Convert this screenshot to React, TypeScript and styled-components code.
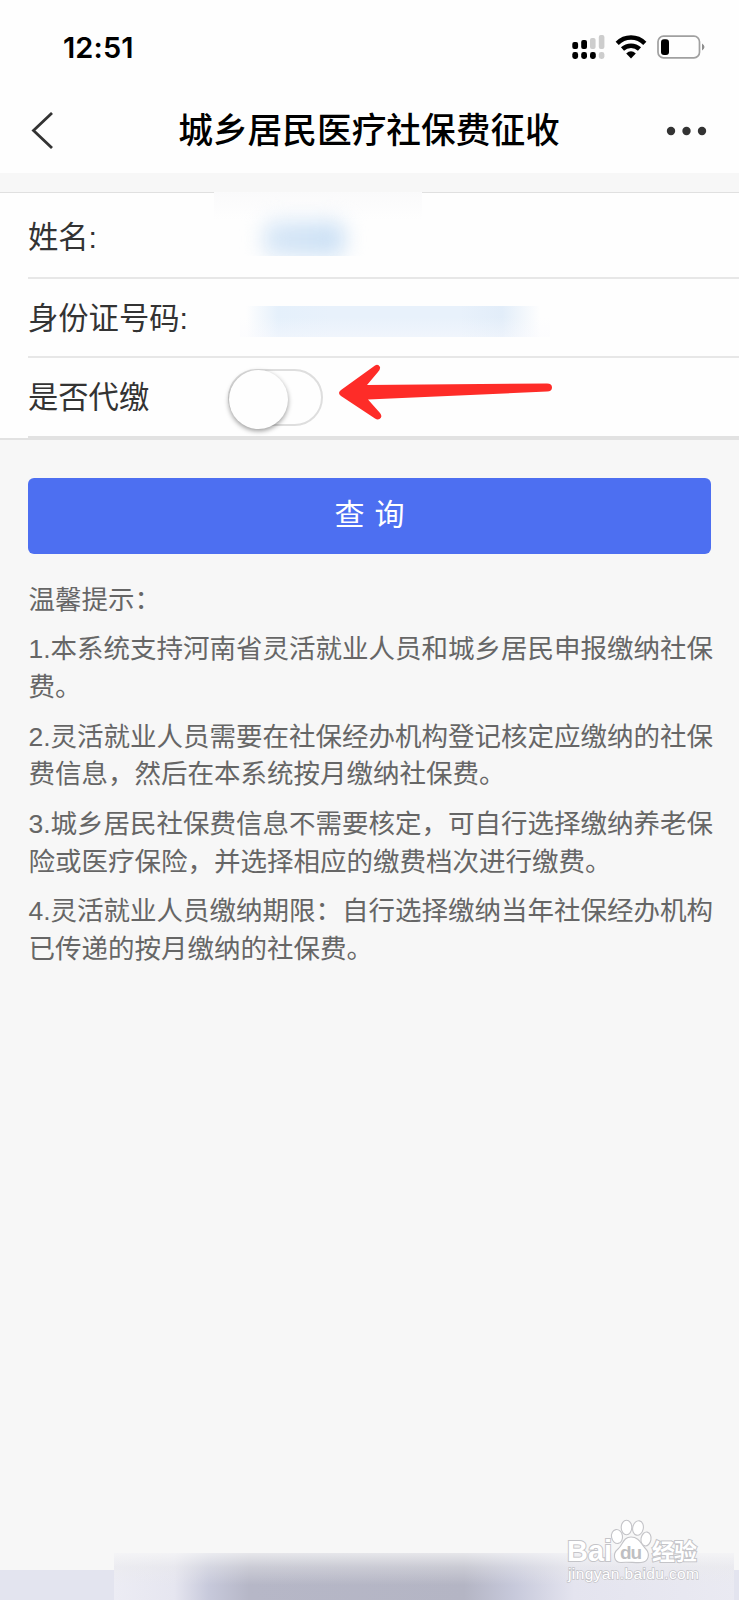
import React from 'react';
import styled, { createGlobalStyle } from 'styled-components';

const GlobalStyle = createGlobalStyle`
  * { box-sizing: border-box; }
  body {
    margin: 0;
    background: #f7f7f7;
    font-family: "Liberation Sans", "Noto Sans CJK SC", sans-serif;
  }
`;

const Screen = styled.div`
  position: relative;
  display: flex;
  flex-direction: column;
  width: 739px;
  height: 1600px;
  overflow: hidden;
  background: #f7f7f7;
`;

const StatusBar = styled.header`
  display: flex;
  align-items: center;
  justify-content: space-between;
  height: 92px;
  padding: 2px 34px 0 63px;
  background: #fefefe;
`;

const Clock = styled.time`
  padding-top: 1px;
  font: 600 29px/36px Inter, sans-serif;
  letter-spacing: 0.1px;
  color: #000;
`;

const StatusIcons = styled.div`
  display: flex;
  align-items: center;
  gap: 10px;
`;

const NavBar = styled.nav`
  display: grid;
  grid-template-columns: 42px 1fr 42px;
  align-items: center;
  height: 81px;
  padding: 0 32px 4px 31px;
  background: #fefefe;
`;

const Title = styled.h1`
  margin: 0;
  padding-bottom: 5px;
  font: 500 34.7px/44px "Noto Sans CJK SC", sans-serif;
  text-align: center;
  color: #000;
  white-space: nowrap;
`;

const Form = styled.section`
  margin-top: 19px;
  border-top: 1px solid #e0e0e0;
  border-bottom: 2px solid #e2e2e2;
  background: #fefefe;
`;

const Row = styled.div<{ $height: number; $line?: string }>`
  display: flex;
  align-items: center;
  height: ${(p) => p.$height}px;
  margin-left: 28px;
  border-bottom: 2px solid ${(p) => p.$line ?? '#e7e7e7'};
`;

const Label = styled.label<{ $drop?: number }>`
  width: 200px;
  padding-top: ${(p) => p.$drop ?? 1}px;
  font-size: 30.3px;
  line-height: 40px;
  color: #333;
  white-space: nowrap;
`;

const NameMask = styled.span`
  align-self: flex-start;
  flex: none;
  width: 208px;
  height: 64px;
  margin: -1px 0 0 -14px;
  overflow: hidden;
  background: linear-gradient(#fafafb, #fefefe 28px);

  &::before {
    content: "";
    display: block;
    width: 82px;
    height: 36px;
    margin: 29px 0 0 49px;
    border-radius: 12px;
    background: linear-gradient(90deg, #d9e8f7, #cbe0f5);
    filter: blur(10px);
  }
`;

const IdMask = styled.span`
  flex: none;
  width: 310px;
  height: 31px;
  margin: 7px 0 0 12px;
  background:
    linear-gradient(rgba(254, 254, 254, 0) 35%, rgba(250, 250, 254, 0.45)),
    linear-gradient(90deg, rgba(254, 254, 254, 0) 6px, #e5f0fb 38px, #e8f1fb 90px, #e8f1fb 220px, #e2edf9 262px, rgba(254, 254, 254, 0) 300px);
`;

const Switch = styled.span`
  flex: none;
  width: 95px;
  height: 57px;
  border: 2px solid #dedede;
  border-radius: 29px;
  background: #fefefe;
`;

const Knob = styled.span`
  display: block;
  width: 59px;
  height: 59px;
  margin: -1px 0 0 -1px;
  border-radius: 50%;
  background: #fefefe;
  box-shadow: 0 2px 5px rgba(0, 0, 0, 0.4);
`;

const Pointer = styled.svg`
  flex: none;
  margin: -9px 0 0 15px;
`;

const QueryButton = styled.button`
  height: 76px;
  margin: 38px 28px 0;
  padding: 0 0 2px;
  border: 0;
  border-radius: 6px;
  background: #4d6ff1;
  color: #fff;
  font: 400 30px/40px "Liberation Sans", "Noto Sans CJK SC", sans-serif;
  word-spacing: 1.5px;
`;

const Tips = styled.section`
  display: flex;
  flex-direction: column;
  gap: 11.4px;
  padding: 28px 0 0 28.5px;
  font-size: 26.5px;
  line-height: 37.9px;
  color: #666;
  white-space: nowrap;
`;

const Tip = styled.p`
  margin: 0;
`;

const Line = styled.span`
  display: block;
`;

const BottomBar = styled.footer`
  display: grid;
  grid-template-columns: 114px 1fr 5px;
  align-items: end;
  height: 47px;
  margin-top: auto;
`;

const BarEdge = styled.div`
  height: 30px;
  background: #e3e4ef;
`;

const BarBlur = styled.div`
  height: 47px;
  background:
    linear-gradient(rgba(247, 247, 247, 0.75) 0, rgba(235, 235, 235, 0.4) 14px, rgba(220, 220, 220, 0) 32px),
    linear-gradient(90deg, #ececf4 0, #e6e6f0 60px, #c7c9db 95px, #b6b7c7 135px, #b4b5c4 350px, #c7c9db 400px, #e4e4ef 460px, #eaeaf2 624px);
`;

const Watermark = styled.svg`
  position: absolute;
  left: 560px;
  top: 1512px;
`;

const WatermarkText = styled.text<{ $cjk?: boolean; $bold?: boolean }>`
  font-family: ${(p) => (p.$cjk ? '"Noto Sans CJK SC"' : '"Liberation Sans"')}, sans-serif;
  font-weight: ${(p) => (p.$bold ? 700 : 400)};
  paint-order: stroke;
`;

const tips = [
  ['温馨提示：'],
  ['1.本系统支持河南省灵活就业人员和城乡居民申报缴纳社保', '费。'],
  ['2.灵活就业人员需要在社保经办机构登记核定应缴纳的社保', '费信息，然后在本系统按月缴纳社保费。'],
  ['3.城乡居民社保费信息不需要核定，可自行选择缴纳养老保', '险或医疗保险，并选择相应的缴费档次进行缴费。'],
  ['4.灵活就业人员缴纳期限：自行选择缴纳当年社保经办机构', '已传递的按月缴纳的社保费。'],
];

const SignalIcon = () => (
  <svg width="33" height="26" viewBox="0 0 33 26">
    <g fill="#000">
      <rect x="0.3" y="8" width="5.8" height="7" rx="2" />
      <rect x="9.2" y="6" width="5.8" height="9" rx="2" />
      <rect x="0.3" y="18" width="5.8" height="7" rx="2.4" />
      <rect x="9.2" y="18" width="5.8" height="7" rx="2.4" />
      <rect x="18" y="18" width="5.8" height="7" rx="2.4" />
    </g>
    <g fill="#cdcdcd">
      <rect x="18" y="4" width="5.6" height="11" rx="2" />
      <rect x="26.8" y="1" width="5.6" height="14" rx="2" />
      <rect x="26.8" y="18" width="5.6" height="7" rx="2.4" />
    </g>
  </svg>
);

const WifiIcon = () => (
  <svg width="32" height="24" viewBox="0 0 32 24">
    <g fill="none" stroke="#000" strokeWidth="4.5">
      <path d="M2.2 8.3Q8 2.500 16 2.500T29.800 8.300" />
      <path d="M7.500 14Q11 10.700 16 10.700T24.500 14" />
    </g>
    <path d="M11.200 18.500Q16 14 20.800 18.500L16 23.400Z" />
  </svg>
);

const BatteryIcon = () => (
  <svg width="48" height="24" viewBox="0 0 48 24">
    <rect x="1" y="1.2" width="41.5" height="21.6" rx="5.5" fill="none" stroke="#a0a0a0" strokeWidth="1.7" />
    <rect x="4" y="4.3" width="8" height="15.6" rx="3" />
    <path d="M45 8.500Q50 12 45 15.500Z" fill="#8e8e8e" />
  </svg>
);

export default function App() {
  return (
    <Screen>
      <GlobalStyle />
      <StatusBar>
        <Clock>12:51</Clock>
        <StatusIcons>
          <SignalIcon />
          <WifiIcon />
          <BatteryIcon />
        </StatusIcons>
      </StatusBar>
      <NavBar>
        <svg width="22" height="37" viewBox="0 0 22 37">
          <path d="M21 1L2.500 18.500L21 36" fill="none" stroke="#333" strokeWidth="2.8" />
        </svg>
        <Title>城乡居民医疗社保费征收</Title>
        <svg width="42" height="10" viewBox="0 0 42 10" fill="#333">
          <circle cx="6" cy="5" r="4.2" />
          <circle cx="21.5" cy="5" r="4.2" />
          <circle cx="37" cy="5" r="4.2" />
        </svg>
      </NavBar>
      <Form>
        <Row $height={86}>
          <Label $drop={5}>姓名:</Label>
          <NameMask />
        </Row>
        <Row $height={79}>
          <Label $drop={2}>身份证号码:</Label>
          <IdMask />
        </Row>
        <Row $height={80} $line="#e2e2e2">
          <Label $drop={2}>是否代缴</Label>
          <Switch role="switch" aria-checked="false"><Knob /></Switch>
          <Pointer width="216" height="58" viewBox="0 0 216 58">
            <path
              d="M3 26L37 1.500Q40-.5 42 3Q42.500 5.500 40 8L29 21L209 19.500Q214 19.500 214 23.500T209 27.500L30 35.500L42 49Q45 53 41.500 55Q39.500 56 37 54.500L3 32Q-1 29 3 26Z"
              fill="#fe2c28"
            />
          </Pointer>
        </Row>
      </Form>
      <QueryButton type="button">查 询</QueryButton>
      <Tips>
        {tips.map((lines) => (
          <Tip key={lines[0]}>
            {lines.map((line) => <Line key={line}>{line}</Line>)}
          </Tip>
        ))}
      </Tips>
      <BottomBar>
        <BarEdge />
        <BarBlur />
        <BarEdge />
      </BottomBar>
      <Watermark width="150" height="75" viewBox="0 0 150 75">
        <g fill="#fff" stroke="#c4c4c8" strokeWidth="1.1">
          <ellipse cx="57" cy="24.5" rx="5.5" ry="7" transform="rotate(-10 57 24.500)" />
          <ellipse cx="66.5" cy="15.5" rx="5.3" ry="7.3" />
          <ellipse cx="78" cy="16" rx="5.3" ry="7.3" transform="rotate(12 78 16)" />
          <ellipse cx="86" cy="27" rx="5" ry="7" transform="rotate(10 86 27)" />
          <path d="M71 25C79 25 81 32 85 36C91 42 88.500 50 81 50.500C76 51 66 49.500 61 50.500C54 50.500 52 42 58 37C63 33 63 25 71 25Z" />
          <g strokeWidth="2">
            <WatermarkText $bold x="7" y="49" fontSize="30" textLength="45" lengthAdjust="spacingAndGlyphs">Bai</WatermarkText>
            <WatermarkText $bold $cjk x="92" y="47.5" fontSize="23" textLength="45">经验</WatermarkText>
            <WatermarkText x="8" y="66.5" fontSize="15.5" textLength="131" strokeWidth="1.4">jingyan.baidu.com</WatermarkText>
          </g>
        </g>
        <WatermarkText $bold x="60" y="47" fontSize="19" fill="#bfbfc2" textLength="22">du</WatermarkText>
      </Watermark>
    </Screen>
  );
}
